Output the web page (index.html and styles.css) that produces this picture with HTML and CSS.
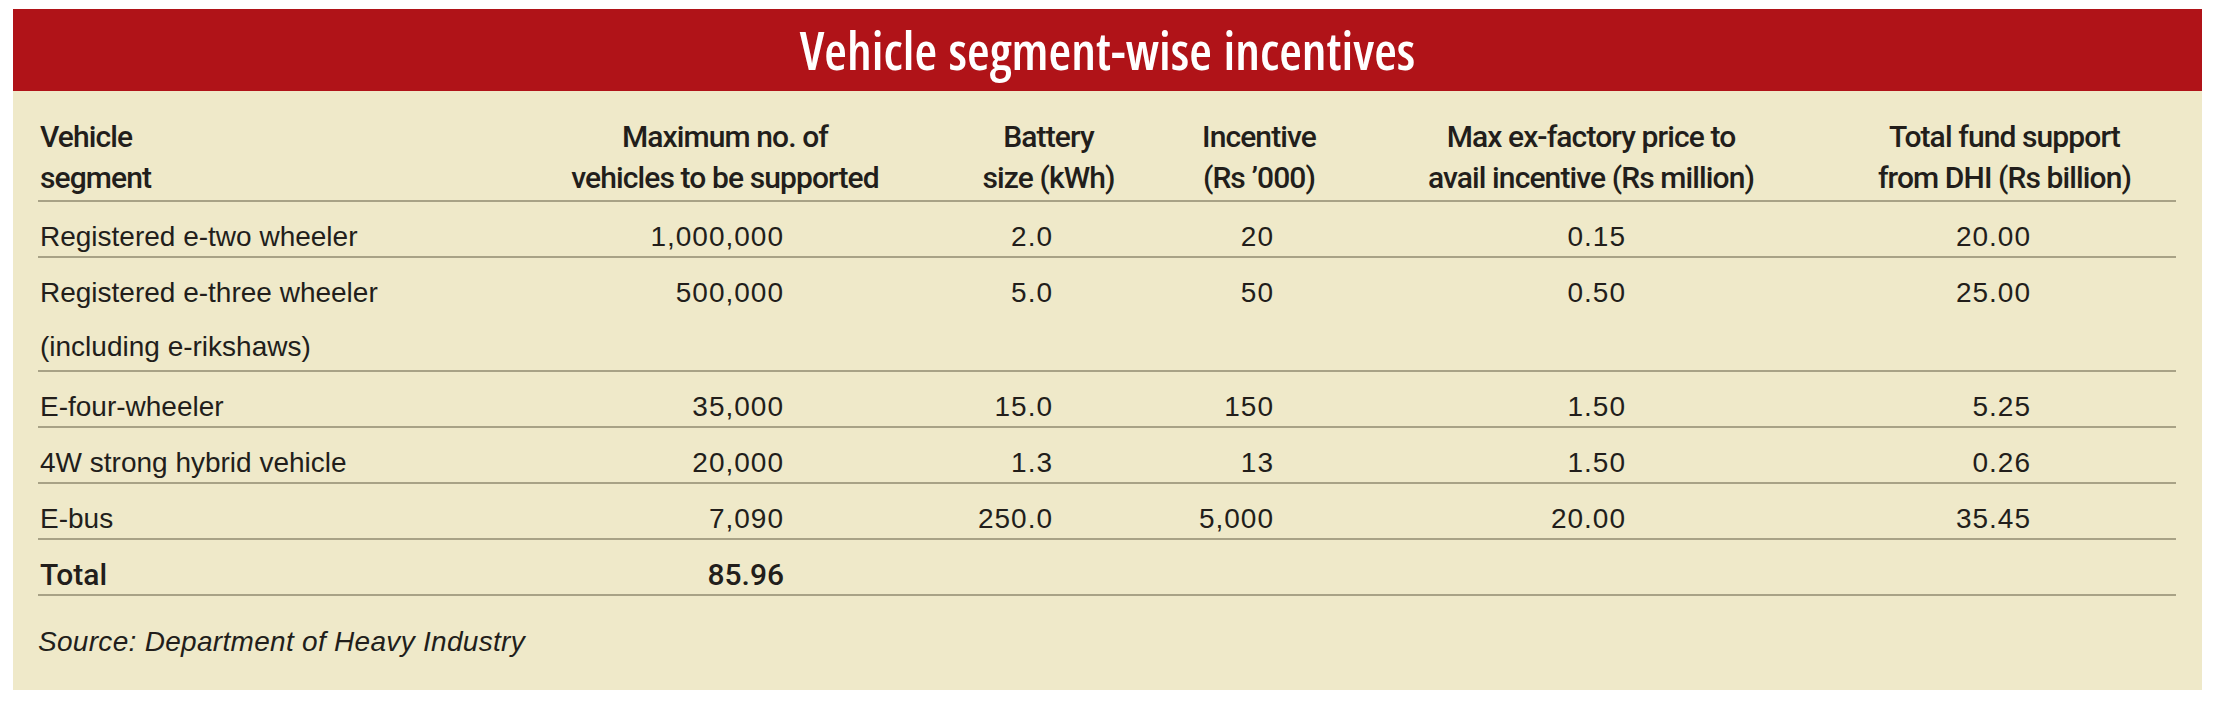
FILE: index.html
```html
<!DOCTYPE html>
<html lang="en">
<head>
<meta charset="utf-8">
<title>Vehicle segment-wise incentives</title>
<link rel="stylesheet" href="styles.css">
</head>
<body>
<div class="card">
  <h1 class="title">Vehicle segment-wise incentives</h1>
  <div class="table">
    <div class="row head">
      <div class="cell h1c">Vehicle<br>segment</div>
      <div class="cell h2c">Maximum no. of<br>vehicles to be supported</div>
      <div class="cell h3c">Battery<br>size (kWh)</div>
      <div class="cell h4c">Incentive<br>(Rs ’000)</div>
      <div class="cell h5c">Max ex-factory price to<br>avail incentive (Rs million)</div>
      <div class="cell h6c">Total fund support<br>from DHI (Rs billion)</div>
    </div>
    <div class="row">
      <div class="cell name">Registered e-two wheeler</div>
      <div class="cell num v2">1,000,000</div>
      <div class="cell num v3">2.0</div>
      <div class="cell num v4">20</div>
      <div class="cell num v5">0.15</div>
      <div class="cell num v6">20.00</div>
    </div>
    <div class="row tall">
      <div class="cell name">Registered e-three wheeler<span class="sub">(including e-rikshaws)</span></div>
      <div class="cell num v2">500,000</div>
      <div class="cell num v3">5.0</div>
      <div class="cell num v4">50</div>
      <div class="cell num v5">0.50</div>
      <div class="cell num v6">25.00</div>
    </div>
    <div class="row">
      <div class="cell name">E-four-wheeler</div>
      <div class="cell num v2">35,000</div>
      <div class="cell num v3">15.0</div>
      <div class="cell num v4">150</div>
      <div class="cell num v5">1.50</div>
      <div class="cell num v6">5.25</div>
    </div>
    <div class="row">
      <div class="cell name">4W strong hybrid vehicle</div>
      <div class="cell num v2">20,000</div>
      <div class="cell num v3">1.3</div>
      <div class="cell num v4">13</div>
      <div class="cell num v5">1.50</div>
      <div class="cell num v6">0.26</div>
    </div>
    <div class="row">
      <div class="cell name">E-bus</div>
      <div class="cell num v2">7,090</div>
      <div class="cell num v3">250.0</div>
      <div class="cell num v4">5,000</div>
      <div class="cell num v5">20.00</div>
      <div class="cell num v6">35.45</div>
    </div>
    <div class="row total">
      <div class="cell name">Total</div>
      <div class="cell num v2">85.96</div>
      <div class="cell"></div>
      <div class="cell"></div>
      <div class="cell"></div>
      <div class="cell"></div>
    </div>
  </div>
  <p class="source">Source: Department of Heavy Industry</p>
</div>
</body>
</html>
```

FILE: styles.css
```css
html, body {
  margin: 0;
  padding: 0;
  background: #ffffff;
}

body {
  padding-top: 9px;
  color: #221e1b;
  font-family: "Liberation Sans", Arial, sans-serif;
}

.card {
  margin: 0 14px 0 13px;
  background: #efe9c9;
  padding-bottom: 28px;
}

.title {
  margin: 0;
  background: #b01318;
  color: #ffffff;
  text-align: center;
  font-family: "Open Sans", "Liberation Sans Narrow", sans-serif;
  font-stretch: 75%;
  font-weight: 600;
  font-size: 52px;
  line-height: 82px;
  word-spacing: 2px;
}

.table {
  margin: 0 26px 0 25px;
}

.row {
  display: grid;
  grid-template-columns: 522px 340px 250px 230px 420px 376px;
  border-bottom: 2px solid #a8a286;
}

.cell {
  padding-top: 15px;
  font-size: 28px;
  line-height: 39px;
  white-space: nowrap;
}

.head .cell {
  padding-top: 25px;
  padding-bottom: 2px;
  font-family: Roboto, "Liberation Sans", sans-serif;
  font-weight: 500;
  font-size: 30px;
  line-height: 41px;
  letter-spacing: -0.9px;
  text-align: center;
}

.head .h1c { text-align: left; padding-left: 2px; }
.head .h2c { padding-right: 10px; }
.head .h3c { padding-left: 47px; }
.head .h4c { padding-right: 12px; }
.head .h5c { padding-left: 2px; }
.head .h6c { padding-left: 33px; }

.name {
  text-align: left;
  padding-left: 2px;
}

.sub {
  display: block;
  margin-top: 15px;
}

.tall {
  padding-bottom: 4px;
}

.num {
  text-align: right;
  letter-spacing: 1px;
}

.v2 { padding-right: 116px; }
.v3 { padding-right: 97px; }
.v4 { padding-right: 106px; }
.v5 { padding-right: 174px; }
.v6 { padding-right: 145px; }

.total .cell {
  font-family: Roboto, "Liberation Sans", sans-serif;
  font-weight: 500;
  font-size: 30px;
  letter-spacing: 0;
}

.source {
  margin: 0 26px 0 25px;
  padding-top: 26px;
  font-style: italic;
  font-size: 28px;
  line-height: 40px;
  letter-spacing: 0.3px;
}
```
